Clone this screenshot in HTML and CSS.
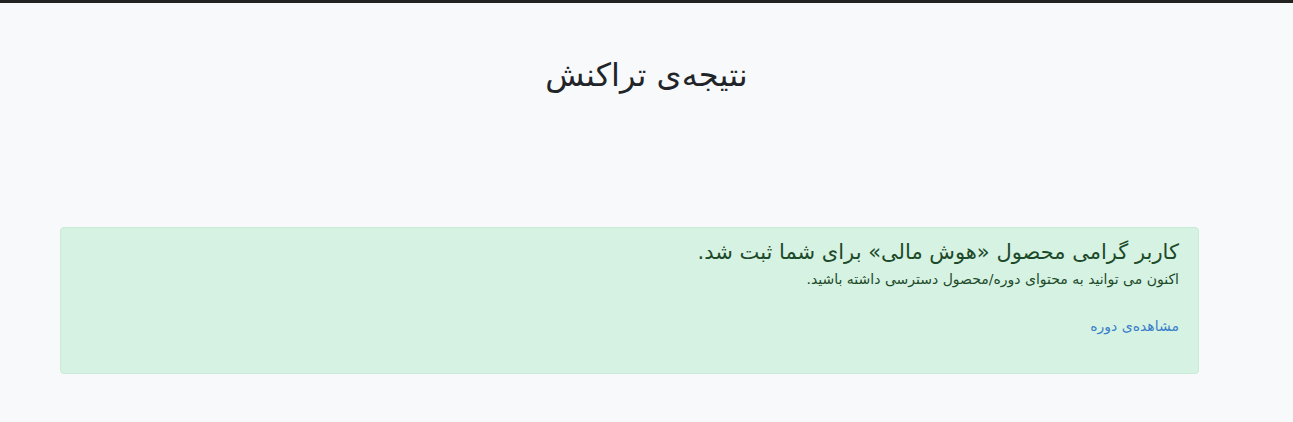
FILE: index.html
```html
<!DOCTYPE html>
<html lang="fa" dir="rtl">
<head>
<meta charset="utf-8">
<title>نتیجه‌ی تراکنش</title>
<link rel="stylesheet" href="styles.css">
</head>
<body>
<div class="topbar"></div>
<main class="page">
  <h1 class="title">نتیجه‌ی تراکنش</h1>
  <section class="content">
    <div class="alert">
      <h4 class="alert-heading">کاربر گرامی محصول «هوش مالی» برای شما ثبت شد.</h4>
      <p class="alert-text">اکنون می توانید به محتوای دوره/محصول دسترسی داشته باشید.</p>
      <a class="alert-link" href="#">مشاهده‌ی دوره</a>
    </div>
  </section>
</main>
</body>
</html>
```
FILE: styles.css
```css
html, body {
  margin: 0;
  padding: 0;
  background: #f8f9fa;
  font-family: "DejaVu Sans", "Noto Sans", sans-serif;
  color: #212529;
}
.topbar {
  height: 3px;
  background: #222222;
}
.page {
  display: flex;
  flex-direction: column;
}
.title {
  margin: 52px 0 0 0;
  text-align: center;
  font-weight: 400;
  font-size: 32px;
  line-height: 40px;
  color: #212529;
}
.content {
  padding: 0 94px 0 60px;
  margin-top: 132px;
}
.alert {
  height: 147px;
  box-sizing: border-box;
  background: #d6f2e2;
  border: 1px solid #c8ead6;
  border-radius: 4px;
  padding: 9px 19px;
  color: #155724;
}
.alert-heading {
  margin: 0;
  font-weight: 400;
  font-size: 21px;
  line-height: 30px;
  color: #1d4a2a;
}
.alert-text {
  margin: 2px 0 0 0;
  font-size: 14px;
  line-height: 20px;
  color: #1d4a2a;
}
.alert-link {
  display: block;
  margin-top: 27px;
  font-size: 14px;
  line-height: 20px;
  color: #3a7fc9;
  text-decoration: none;
}
```
